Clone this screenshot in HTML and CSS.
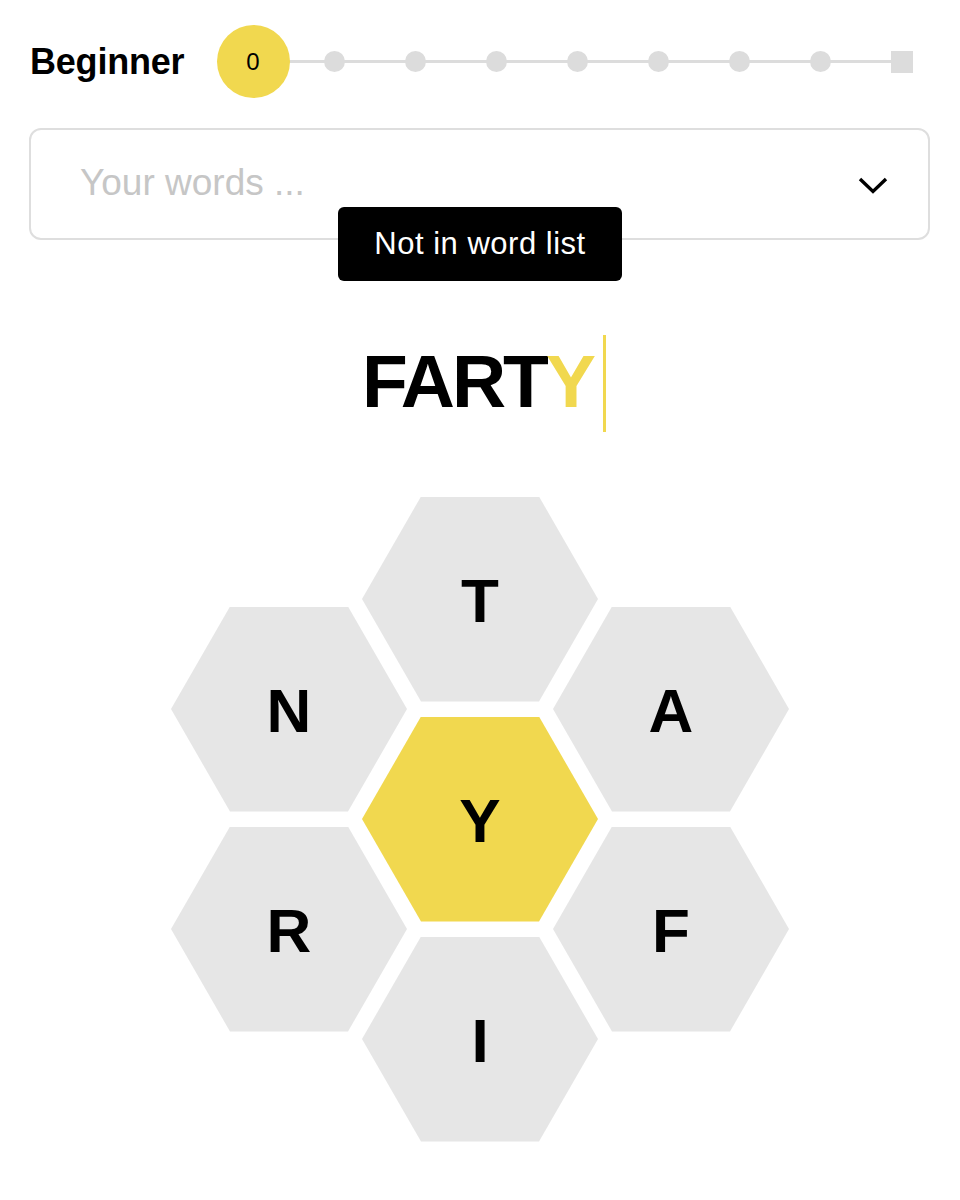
FILE: index.html
```html
<!DOCTYPE html>
<html lang="en">
<head>
<meta charset="utf-8">
<title>Spelling Bee</title>
<link rel="stylesheet" href="styles.css">
</head>
<body>
<div class="page">
  <div class="progress">
    <div class="rank">Beginner</div>
    <div class="track">
      <div class="slot"><span class="score">0</span></div>
      <div class="slot"><span class="dot"></span></div>
      <div class="slot"><span class="dot"></span></div>
      <div class="slot"><span class="dot"></span></div>
      <div class="slot"><span class="dot"></span></div>
      <div class="slot"><span class="dot"></span></div>
      <div class="slot"><span class="dot"></span></div>
      <div class="slot"><span class="dot"></span></div>
      <div class="slot"><span class="square"></span></div>
    </div>
  </div>

  <div class="wordbox">
    <span class="placeholder">Your words ...</span>
    <svg class="chevron" width="30" height="17" viewBox="0 0 30 17"><polyline points="2,2 15,14.5 28,2" fill="none" stroke="#000" stroke-width="3.4"/></svg>
    <div class="toast">Not in word list</div>
  </div>

  <div class="entry">
    <span class="typed">FART<span class="center-letter">Y</span></span>
    <span class="cursor"></span>
  </div>

  <div class="hive">
    <div class="cell c2 r1"><span>T</span></div>
    <div class="cell c1 r2"><span>N</span></div>
    <div class="cell c3 r2"><span>A</span></div>
    <div class="cell c2 r3 center"><span>Y</span></div>
    <div class="cell c1 r4"><span>R</span></div>
    <div class="cell c3 r4"><span>F</span></div>
    <div class="cell c2 r5"><span>I</span></div>
  </div>
</div>
</body>
</html>
```

FILE: styles.css
```css
html, body {
  margin: 0;
  padding: 0;
  background: #fff;
}

body {
  font-family: "Liberation Sans", Arial, sans-serif;
  color: #000;
}

.page {
  width: 960px;
}

.progress {
  display: flex;
  align-items: center;
  padding: 25px 0 0 30px;
  height: 73px;
}

.rank {
  width: 182.5px;
  font-size: 36px;
  font-weight: 700;
  letter-spacing: -0.2px;
}

.track {
  display: flex;
  align-items: center;
  height: 73px;
  background: linear-gradient(#dcdcdc, #dcdcdc) no-repeat;
  background-position: 40.5px 35px;
  background-size: 649px 3px;
}

.slot {
  width: 81.1px;
  height: 73px;
  display: flex;
  align-items: center;
  justify-content: center;
}

.score {
  width: 73px;
  height: 73px;
  border-radius: 50%;
  background: #f1d84f;
  display: flex;
  align-items: center;
  justify-content: center;
  font-size: 24px;
  flex: none;
}

.dot {
  width: 21px;
  height: 21px;
  border-radius: 50%;
  background: #dcdcdc;
}

.square {
  width: 22px;
  height: 22px;
  background: #dcdcdc;
}

.wordbox {
  position: relative;
  margin: 30px 0 0 29px;
  box-sizing: border-box;
  width: 901px;
  height: 112px;
  border: 2px solid #dedede;
  border-radius: 12px;
  display: flex;
  align-items: center;
  justify-content: space-between;
  padding: 0 40px 0 49px;
}

.placeholder {
  font-size: 37px;
  color: #c6c6c6;
  margin-top: -2px;
}

.chevron {
  display: block;
  margin-top: 2px;
}

.toast {
  position: absolute;
  left: 307px;
  top: 77px;
  width: 284px;
  height: 74px;
  box-sizing: border-box;
  background: #000;
  color: #fff;
  border-radius: 6px;
  font-size: 31px;
  letter-spacing: 0.5px;
  display: flex;
  align-items: center;
  justify-content: center;
}

.entry {
  display: flex;
  justify-content: center;
  align-items: center;
  height: 97px;
  margin-top: 95px;
  padding-left: 8px;
}

.typed {
  font-size: 75px;
  font-weight: 700;
  line-height: 75px;
  letter-spacing: -3px;
  margin-bottom: 4px;
}

.center-letter {
  color: #f1d84f;
}

.cursor {
  width: 3px;
  height: 97px;
  background: #f1d84f;
  margin-left: 10px;
}

.hive {
  display: grid;
  grid-template-columns: repeat(3, 191px);
  grid-template-rows: repeat(6, 110px);
  width: 573px;
  margin: 57px auto 0;
}

.cell {
  width: 236px;
  height: 205px;
  margin: 7.5px -22.5px;
  background: #e6e6e6;
  clip-path: polygon(25% 0, 75% 0, 100% 50%, 75% 100%, 25% 100%, 0 50%);
  display: flex;
  align-items: center;
  justify-content: center;
  font-size: 62px;
  font-weight: 700;
}

.cell span {
  margin-top: 2px;
}

.cell.center {
  background: #f1d84f;
}

.c1 { grid-column: 1; }
.c2 { grid-column: 2; }
.c3 { grid-column: 3; }
.r1 { grid-row: 1 / span 2; }
.r2 { grid-row: 2 / span 2; }
.r3 { grid-row: 3 / span 2; }
.r4 { grid-row: 4 / span 2; }
.r5 { grid-row: 5 / span 2; }
```
